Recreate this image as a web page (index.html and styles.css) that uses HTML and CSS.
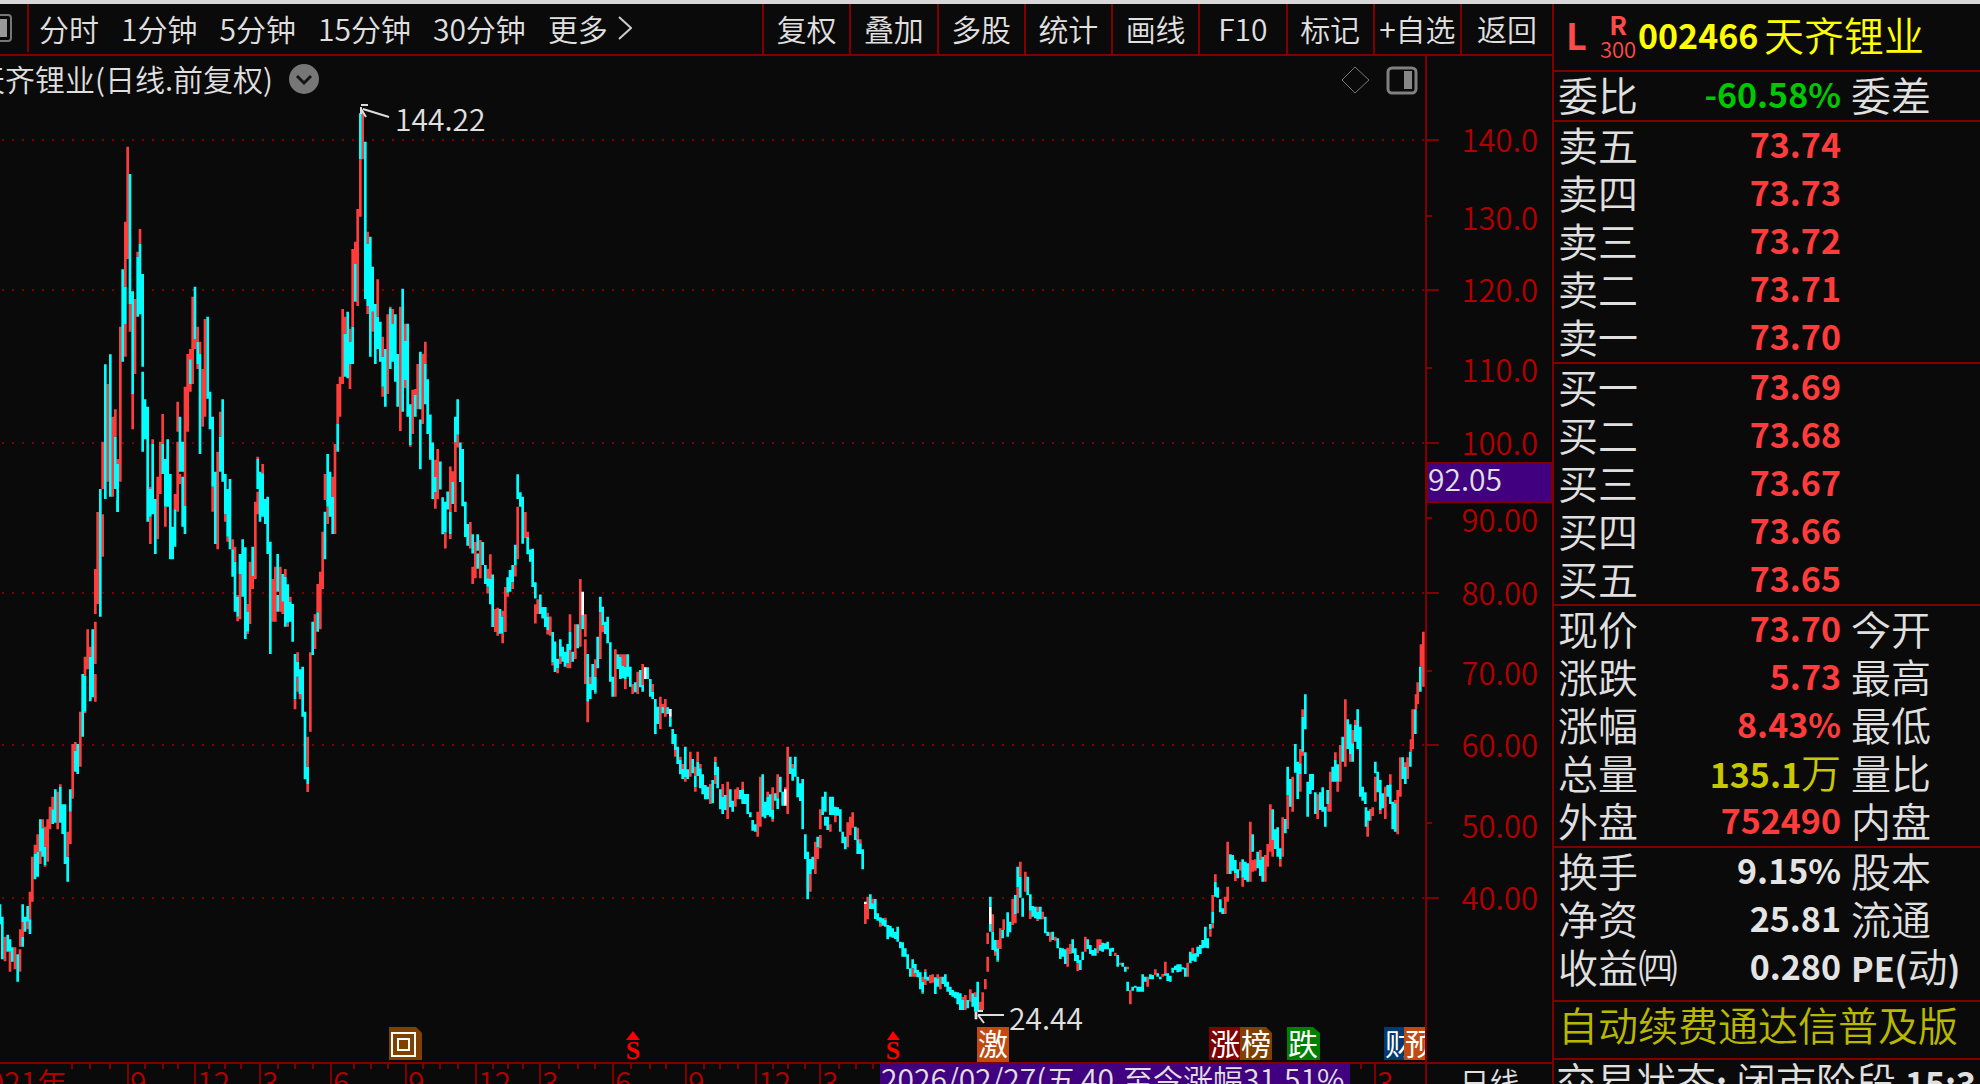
FILE: index.html
```html
<!DOCTYPE html>
<html lang="zh-CN">
<head>
    <meta charset="UTF-8">
    <meta name="viewport" content="width=device-width, initial-scale=1.0">
    <title>天齐锂业 002466 日线</title>
    <link rel="stylesheet" href="styles.css">
</head>
<body>
    <div class="window">
        <main class="left">
            <nav class="toolbar">
                <button class="layout-btn" aria-label="布局">
                    <svg width="12" height="28" viewBox="0 0 12 28"><path d="M0 1H8Q11 1 11 4V24Q11 27 8 27H0" fill="none" stroke="#777" stroke-width="2"/><rect x="0" y="5" width="7" height="18" fill="#999"/></svg>
                </button>
                <div class="periods">
                    <button>分时</button>
                    <button>1分钟</button>
                    <button>5分钟</button>
                    <button>15分钟</button>
                    <button>30分钟</button>
                    <button class="more">更多<svg width="14" height="26" viewBox="0 0 14 26"><path d="M1 2L13 13L1 24" fill="none" stroke="#ccc" stroke-width="2"/></svg></button>
                </div>
                <div class="tools">
                    <button>复权</button>
                    <button>叠加</button>
                    <button>多股</button>
                    <button>统计</button>
                    <button>画线</button>
                    <button>F10</button>
                    <button>标记</button>
                    <button>+自选</button>
                    <button>返回</button>
                </div>
            </nav>

            <svg class="chart" viewBox="0 56 1552 1006">
                <g id="grid"></g>
                <g id="bars"></g>

                <text class="txt" x="-25" y="91">天齐锂业(日线.前复权)</text>
                <circle cx="304" cy="79" r="15" fill="#777"/>
                <path d="M297 76L304 83L311 76" fill="none" stroke="#151515" stroke-width="3"/>
                <path d="M1355 67L1369 80L1355 93L1342 80Z" fill="none" stroke="#777" stroke-width="1"/>
                <rect x="1388" y="68" width="28" height="25" rx="4" fill="none" stroke="#808080" stroke-width="3"/>
                <rect x="1404" y="71" width="8" height="18" fill="#888"/>

                <!-- high and low markers -->
                <path d="M361 114V107M361 105H368M361 109L366 117M363 109L389 117" fill="none" stroke="#ddd" stroke-width="2"/>
                <text class="txt" x="395" y="131">144.22</text>
                <path d="M976 1012V1018M978 1015H1004M978 1011H983M978 1015L984 1023" fill="none" stroke="#ddd" stroke-width="2"/>
                <text class="txt" x="1009" y="1030">24.44</text>

                <!-- event badges -->
                <g class="badge">
                    <path d="M389 1027H416L422 1033V1060H389Z" fill="#804000"/>
                    <path d="M392 1033H415V1056H392ZM398 1039H409V1050H398Z" fill="none" stroke="#fff" stroke-width="2"/>
                    <path d="M977 1027H1009V1062H977Z" fill="#c04a10"/>
                    <text x="993" y="1055">激</text>
                    <path d="M1209 1027H1240V1060H1209Z" fill="#800000"/>
                    <text x="1225" y="1055">涨</text>
                    <path d="M1240 1027H1266L1272 1033V1060H1240Z" fill="#804000"/>
                    <text x="1256" y="1055">榜</text>
                    <path d="M1287 1027H1313L1320 1033V1060H1287Z" fill="#008000"/>
                    <text x="1303" y="1055">跌</text>
                    <path d="M1384 1027H1416V1060H1384Z" fill="#003a70"/>
                    <text x="1400" y="1055">财</text>
                    <path d="M1404 1027H1425V1060H1404Z" fill="#c04a10"/>
                    <text x="1420" y="1055">预</text>
                </g>
                <g class="mark">
                    <path d="M626 1040L633 1031L640 1040Z"/>
                    <text x="633" y="1059">S</text>
                    <path d="M887 1040L893 1031L900 1040Z"/>
                    <text x="893" y="1059">S</text>
                </g>

                <!-- price axis -->
                <rect x="1427" y="56" width="125" height="1006" fill="#0a0a0a"/>
                <path d="M1426 56V1062" stroke="#800000" stroke-width="2"/>
                <g id="prices"></g>
                <rect x="1427" y="463" width="125" height="39" fill="#400080" stroke="#800000" stroke-width="2"/>
                <text class="txt" x="1428" y="491">92.05</text>
            </svg>

            <div class="time-row">
                <svg class="timeline" viewBox="0 1064 1425 34">
                    <g id="ticks"></g>
                    <rect x="880" y="1064" width="470" height="34" fill="#400080"/>
                    <text class="txt" y="1091"><tspan x="881">2026/02/27(五</tspan><tspan x="1081">40</tspan><tspan x="1123">至今涨幅31.51%</tspan></text>
                </svg>
                <button class="period-now">日线</button>
            </div>
        </main>

        <aside class="quote">
            <h1 class="stock">
                <span class="flag-l">L</span>
                <span class="flags"><b>R</b><small>300</small></span>
                <span class="code">002466</span>
                <span class="name">天齐锂业</span>
            </h1>
            <table>
                <tr><th>委比</th><td class="down">-60.58%</td><th>委差</th></tr>
            </table>
            <table>
                <tr><th>卖五</th><td>73.74</td><th></th></tr>
                <tr><th>卖四</th><td>73.73</td><th></th></tr>
                <tr><th>卖三</th><td>73.72</td><th></th></tr>
                <tr><th>卖二</th><td>73.71</td><th></th></tr>
                <tr><th>卖一</th><td>73.70</td><th></th></tr>
            </table>
            <table>
                <tr><th>买一</th><td>73.69</td><th></th></tr>
                <tr><th>买二</th><td>73.68</td><th></th></tr>
                <tr><th>买三</th><td>73.67</td><th></th></tr>
                <tr><th>买四</th><td>73.66</td><th></th></tr>
                <tr><th>买五</th><td>73.65</td><th></th></tr>
            </table>
            <table>
                <tr><th>现价</th><td>73.70</td><th>今开</th></tr>
                <tr><th>涨跌</th><td>5.73</td><th>最高</th></tr>
                <tr><th>涨幅</th><td>8.43%</td><th>最低</th></tr>
                <tr><th>总量</th><td class="vol">135.1<span>万</span></td><th>量比</th></tr>
                <tr><th>外盘</th><td>752490</td><th>内盘</th></tr>
            </table>
            <table class="basics">
                <tr><th>换手</th><td class="flat">9.15%</td><th>股本</th></tr>
                <tr><th>净资</th><td class="flat">25.81</td><th>流通</th></tr>
                <tr><th>收益㈣</th><td class="flat">0.280</td><th><b>PE(</b>动<b>)</b></th></tr>
            </table>
            <p class="notice">自动续费通达信普及版</p>
            <p class="status">交易状态<b>:</b> 闭市阶段 <b>15:3</b></p>
        </aside>
    </div>
    <script src="chart.js"></script>
</body>
</html>
```

FILE: styles.css
```css
* {
    box-sizing: border-box;
}

body {
    margin: 0;
    background: #0a0a0a;
    color: #e0e0e0;
    font-family: "Noto Sans CJK SC", sans-serif;
    font-weight: 350;
    overflow: hidden;
}

button {
    padding: 0;
    border: 0;
    background: none;
    color: inherit;
    font: inherit;
    cursor: pointer;
    white-space: nowrap;
}

.window {
    display: grid;
    grid-template-columns: minmax(0, 1fr) 428px;
    height: 100vh;
    overflow: hidden;
    border-top: 4px solid #d8d8d8;
}

/* toolbar */
.toolbar {
    display: flex;
    height: 52px;
    padding-bottom: 2px;
    border-bottom: 2px solid #800000;
    font-size: 30px;
    line-height: 44px;
}

.layout-btn {
    width: 29px;
    border-right: 2px solid #800000;
    display: flex;
    align-items: center;
}

.periods {
    flex: 1;
    display: flex;
    gap: 22px;
    padding-left: 10px;
}

.more {
    display: flex;
    align-items: center;
    gap: 10px;
}

.tools {
    display: grid;
    grid-template-columns: repeat(8, 1fr) 92px;
    width: 790px;
    margin-bottom: -2px;
}

.tools button {
    padding-bottom: 2px;
    border-left: 2px solid #800000;
}

/* chart */
.chart {
    display: block;
    width: 100%;
}

.txt {
    fill: #e0e0e0;
    font-size: 30px;
}

.axis-txt {
    fill: #b00000;
    font-size: 30px;
}

.price-txt {
    fill: #b00000;
    font-size: 31px;
}

.badge text {
    fill: #fff;
    font-size: 30px;
    font-weight: 400;
    text-anchor: middle;
}

.mark {
    fill: #ff0000;
}

.mark text {
    font-family: "Liberation Serif", serif;
    font-size: 26px;
    font-weight: bold;
    text-anchor: middle;
}

.time-row {
    display: flex;
    border-top: 2px solid #800000;
}

.timeline {
    display: block;
    flex: 1;
    min-width: 0;
}

.period-now {
    width: 127px;
    height: 34px;
    border-left: 2px solid #800000;
    font-size: 30px;
    line-height: 34px;
}

/* quote panel */
.quote {
    border-left: 2px solid #800000;
    overflow: hidden;
    white-space: nowrap;
}

.stock {
    display: flex;
    align-items: center;
    height: 66px;
    margin: 0;
    padding: 0 0 6px 12px;
    color: #ffff00;
    font-weight: 350;
}

.flag-l {
    width: 32px;
    color: #ff4a4a;
    font-size: 36px;
    font-weight: bold;
}

.flags {
    width: 40px;
    display: flex;
    flex-direction: column;
    align-items: center;
    color: #ff4a4a;
    font-size: 26px;
    line-height: 24px;
    padding-top: 4px;
}

.flags b {
    font-weight: bold;
}

.flags small {
    font-size: 22px;
}

.code {
    width: 126px;
    font-size: 34px;
    font-weight: bold;
}

.name {
    font-size: 40px;
}

table {
    width: 100%;
    table-layout: fixed;
    border-spacing: 0;
    border-top: 2px solid #800000;
}

tr {
    height: 48px;
}

th,
td {
    height: 48px;
    padding: 0 0 4px;
    line-height: 40px;
}

th {
    padding-left: 4px;
    font-size: 40px;
    font-weight: 350;
    text-align: left;
}

th:first-child {
    width: 124px;
}

th:last-child {
    padding-left: 10px;
}

th b {
    font-size: 34px;
    font-weight: bold;
}

td {
    width: 163px;
    color: #ff3c3c;
    font-size: 34px;
    font-weight: bold;
    text-align: right;
}

.down {
    color: #00c800;
}

.vol {
    color: #c8c800;
}

.vol span {
    font-size: 40px;
    font-weight: 350;
}

.flat {
    color: #e4e4e4;
}

.basics {
    padding-bottom: 8px;
}

.notice,
.status {
    margin: 0;
    border-top: 2px solid #800000;
    font-size: 40px;
}

.notice {
    height: 58px;
    padding-left: 4px;
    line-height: 44px;
    color: #b8b800;
}

.status {
    padding-left: 2px;
    line-height: 40px;
}

.status b {
    font-size: 34px;
    font-weight: bold;
}
```

FILE: chart.js
```javascript
// each block: origin x, origin y, y scale, then "x top bottom" triples in thirds of a pixel
const blocks = [
    {
        x: 0, y: 100, sy: 1 / 3,
        down: `301 1167 1200,316 793 1197,331 763 1190,346 1010 1167,353 1092 1236,368 508 785,376 560 672,390 222 612,398 574 882,413 470 650,420 432 643,428 522 800,428 815 1055,435 898 1018,443 920 1200,451 1167 1200,458 1032 1200,466 1197 1200,488 1032 1122,496 1077 1200,503 1018 1200,511 1122 1200,540 950 1115,548 1025 1115,548 1130 1200,571 778 852,585 560 717,593 725 792,600 762 1062,623 650 896,630 875 988,638 950 1160,646 1115 1200,661 1010 1115,668 898 1145,676 1122 1200,683 1167 1200,690 1137 1200,773 1077 1167,780 1115 1200,788 1120 1200,796 1197 1200,803 1190 1200,983 1062 1205,990 1115 1200,998 1190 1200,1013 972 1055,1035 702 830,1043 635 835,1050 725 793,1058 680 792,1066 492 605,1081 40 178,1096 125 597,1103 432 618,1111 410 770,1118 500 635,1126 612 792,1133 650 747,1141 665 785,1148 770 860,1156 747 920,1171 625 807,1178 672 785,1186 643 845,1193 762 920`,
        up: `308 1025 1167,323 852 1145,338 950 1190,346 928 1010,353 1077 1092,361 680 1145,376 365 560,376 672 770,383 140 477,390 612 695,398 882 988,405 597 822,413 455 470,420 387 432,451 1160 1167,458 1018 1032,473 1130 1200,481 1025 1182,488 942 1032,525 1182 1200,533 905 995,533 1025 1200,540 1122 1152,555 860 1200,563 762 995,571 747 778,571 852 875,578 590 852,585 717 747,593 680 725,593 792 807,600 725 762,608 807 980,615 657 950,638 1160 1200,653 1055 1200,661 935 1010,773 1070 1077,773 1175 1200,788 1092 1120,975 1122 1200,998 1130 1190,1005 1032 1200,1013 852 972,1020 830 950,1028 627 852,1035 650 702,1050 687 725,1050 793 867,1058 447 680,1066 425 492,1073 327 618,1081 178 350,1088 35 178,1103 395 432,1103 618 642,1118 635 695,1133 538 650,1148 710 770,1148 860 890,1163 643 882,1171 620 625,1178 627 672`
    },
    {
        x: 0, y: 500, sy: 1 / 3,
        down: `0 1213 1273,7 1250 1378,23 1304 1355,30 1318 1355,37 1342 1385,53 1363 1445,68 1213 1266,68 1310 1340,75 1250 1295,83 1218 1265,90 1258 1302,105 1062 1138,113 1055 1130,121 958 1055,128 985 1070,135 1040 1095,158 928 972,166 868 968,181 860 968,188 913 1002,195 913 1092,203 1070 1145,211 868 935,226 752 815,233 732 822,248 522 710,255 528 635,271 470 604,278 388 592,301 0 350,353 0 35,443 0 65,451 0 50,458 0 43,466 0 162,496 0 20,503 0 20,511 0 178,518 80 178,525 28 140,548 0 80,555 18 102,646 0 132,676 0 43,683 0 110,690 0 148,698 148 230,705 185 335,713 290 350,720 162 222,728 118 290,736 142 417,743 335 395,758 140 228,780 0 65,788 0 50,796 0 72,803 0 162,811 125 462,833 162 275,833 285 335,848 222 305,856 230 380,863 253 368,871 305 365,878 312 425,885 462 598,893 485 530,900 508 582,908 500 650,915 635 838,923 800 852,938 365 465,953 337 395,975 35 178,983 0 20,990 0 50,998 0 102`,
        up: `15 1310 1384,30 1355 1415,45 1342 1408,60 1348 1415,61 1288 1340,68 1266 1310,83 1265 1288,90 1175 1258,97 1070 1205,105 1034 1062,113 1003 1055,121 1055 1092,128 958 985,135 980 1040,135 1095 1100,143 958 1085,150 920 988,158 890 928,173 875 988,181 853 860,203 995 1070,211 935 1032,218 732 896,226 726 752,241 635 800,255 470 528,255 635 640,263 388 508,271 440 470,286 207 342,286 365 492,286 522 605,293 36 312,308 43 170,451 50 132,473 0 118,496 20 80,525 0 28,533 0 35,555 0 18,638 0 35,653 0 148,676 43 65,683 110 125,698 118 148,705 140 185,713 285 290,713 350 364,720 222 358,743 312 335,743 395 402,750 185 372,758 228 267,766 5 237,773 0 43,818 237 365,826 200 365,841 200 335,848 305 342,856 207 230,863 368 380,871 290 305,885 598 628,893 457 485,893 530 575,900 582 598,923 710 800,923 852 876,931 457 695,945 343 447,953 252 337,961 215 388,968 95 267,983 20 72,1005 0 102`
    },
    {
        x: 300, y: 100, sy: 0.38265,
        down: `308 493 815,316 630 732,323 585 828,331 795 902,346 770 828,361 658 808,361 835 965,376 690 795,383 730 873,391 822 940,398 895 1043,406 985 1025,421 945 1018,428 1038 1135,436 1050 1130,443 1023 1070,451 1077 1135,458 998 1056,466 828 895,473 782 875,481 895 998,488 912 1062,496 1050 1142,503 1108 1165,518 1135 1185,533 1135 1178,533 1185 1225,548 1155 1215,556 1215 1265,563 1250 1272,571 1252 1318,578 1240 1377,600 1330 1395,607 1350 1395,623 1247 1288,630 1228 1285,638 1215 1260,646 1162 1215,653 978 1043,661 1025 1063,668 1037 1160,683 1142 1187,691 1175 1207,698 1173 1273,706 1260 1303,721 1292 1343,728 1325 1355,736 1325 1377,743 1350 1385,758 1390 1470,765 1415 1495,773 1460 1485`,
        up: `301 540 865,316 585 630,316 732 753,331 902 906,338 757 873,346 755 770,353 690 808,368 663 847,376 632 690,406 940 985,406 1025 1068,413 912 1043,436 1130 1172,451 958 1077,451 1135 1147,458 970 998,466 895 1077,473 875 908,511 1103 1172,518 1220 1265,526 1155 1250,541 1150 1250,563 1225 1250,563 1272 1290,571 1187 1252,586 1330 1390,593 1327 1400,608 1335 1350,608 1395 1420,616 1273 1390,623 1288 1298,638 1260 1278,646 1215 1245,653 1063 1200,676 1077 1145,683 1128 1142,706 1318 1368,713 1305 1343,743 1340 1350,743 1385 1397,751 1350 1400,758 1470 1478,773 1485 1498`
    },
    {
        x: 560, y: 560, sy: 1 / 3,
        down: `1 238 290,8 260 305,15 275 320,23 252 310,30 215 270,38 275 305,53 193 265,68 165 207,83 282 425,91 372 417,98 312 390,106 350 398,113 230 325,121 110 157,128 140 195,136 185 222,143 170 250,151 247 365,158 350 410,173 283 327,181 290 357,188 318 355,196 320 357,203 283 350,211 320 380,226 367 397,241 330 382,248 375 395,263 322 357,271 357 410,278 395 417,286 417 522,293 440 492,308 440 460,323 442 462,331 470 500,338 507 552,346 522 570,353 560 612,361 600 643,368 627 657,376 560 652,383 628 657,398 597 640,406 648 682,413 605 648,421 625 685,428 643 703,436 675 718,443 680 718,458 660 730,466 605 645,473 620 685,481 688 748,488 710 762,496 705 750,511 688 742,518 722 755,541 690 718,548 688 732,556 702 732,563 702 762,571 757 772,578 780 812,586 793 815,608 643 770,615 725 775,623 710 765,631 703 770,638 750 778,646 700 722,653 715 747,661 650 697,668 695 737,691 590 642,698 625 662,706 590 650,713 650 712,721 670 723,728 657 808,736 823 897,743 875 1018,751 897 942,758 890 928,773 830 862,788 710 765,796 695 755,796 770 797,803 770 810,811 710 765,818 710 765,826 740 767,833 742 767,841 748 815,848 815 850,856 830 868,886 800 840,893 838 882,901 850 882,908 868 928,931 1003 1047,938 1030 1047,946 1017 1077,953 1060 1082,961 1072 1088,968 1075 1097,976 1080 1100,983 1095 1138,991 1097 1130,998 1105 1133,1006 1115 1137,1013 1100 1145,1021 1145 1165,1028 1147 1190,1036 1165 1190,1043 1183 1227,1051 1225 1250,1058 1198 1225,1066 1212 1240,1073 1230 1252,1081 1237 1288,1088 1265 1298,1096 1235 1257,1103 1250 1262,1126 1252 1302,1133 1255 1280,1148 1250 1272,1156 1243 1280,1163 1265 1295,1171 1280 1305,1178 1290 1310,1186 1295 1315,1193 1297 1333,1201 1300 1350,1208 1320 1350,1223 1320 1345,1238 1300 1340,1246 1310 1355,1253 1265 1355,1291 1010 1040,1291 1092 1115,1298 1115 1170,1306 1140 1175,1313 1165 1202`,
        up: `1 290 312,23 310 325,30 163 215,30 270 325,46 193 297,61 57 260,76 163 230,76 238 372,83 425 487,91 350 372,106 298 350,106 398 402,121 157 297,128 195 217,166 268 410,181 283 290,188 283 318,196 283 320,196 357 387,218 372 402,233 335 402,248 312 375,278 372 395,301 410 507,308 432 440,316 417 470,346 570 590,361 590 600,368 612 627,376 652 665,391 575 650,406 620 648,406 682 695,413 575 605,421 612 625,451 672 732,466 590 605,466 645 672,488 672 710,503 665 777,526 688 740,533 682 718,548 665 688,593 755 830,601 650 800,623 695 710,638 682 750,638 778 785,653 643 715,676 682 690,683 560 762,698 612 625,751 942 995,766 845 942,773 862 897,781 748 808,781 825 865,811 793 815,826 767 787,863 787 862,871 770 825,878 757 803,893 803 838,901 838 850,916 1032 1092,923 1010 1078,938 1017 1030,961 1088 1100,976 1073 1080,1058 1225 1250,1066 1240 1250,1088 1250 1265,1088 1298 1302,1096 1228 1235,1096 1257 1275,1111 1245 1270,1118 1243 1268,1133 1243 1255,1141 1250 1288,1208 1310 1320,1216 1305 1350,1231 1288 1325,1246 1297 1310,1261 1325 1350,1268 1297 1350,1276 1257 1288,1283 1118 1152,1283 1190 1235,1298 1063 1115,1306 1175 1187,1313 1140 1165,1313 1202 1206`,
        flat: `68 95 165,256 322 357,331 447 470,676 688 737,916 1025 1032,1291 1040 1092,1248 1355 1378`
    },
    {
        x: 1000, y: 600, sy: 1 / 3,
        down: `8 990 1015,23 937 1010,30 965 997,46 885 943,53 800 862,61 830 893,68 895 950,83 830 885,91 883 932,98 918 950,106 920 955,113 935 958,121 920 958,136 950 1000,143 995 1008,158 995 1020,173 1015 1045,181 1043 1077,188 1045 1070,196 1048 1092,218 1018 1060,226 1045 1083,233 1065 1090,241 1080 1110,248 1055 1080,263 1018 1047,271 1035 1062,278 1050 1067,286 1045 1067,301 1035 1052,308 1028 1055,316 1030 1048,323 1025 1048,331 1045 1068,338 1043 1055,353 1065 1100,368 1088 1100,376 1100 1115,383 1145 1173,398 1160 1172,406 1157 1163,413 1160 1175,421 1160 1175,428 1123 1175,436 1130 1145,451 1123 1138,458 1125 1138,473 1120 1130,481 1130 1138,496 1120 1127,503 1120 1143,511 1127 1145,518 1103 1118,526 1097 1110,533 1093 1117,541 1093 1115,548 1102 1108,556 1103 1130,571 1055 1090,578 1062 1082,586 1060 1085,593 1040 1070,601 1035 1062,608 1020 1045,616 980 1043,623 1015 1045,631 972 988,638 935 970,646 845 890,653 862 893,661 898 937,668 925 942,691 763 822,698 765 812,706 780 820,713 808 835,728 778 833,736 785 840,743 790 845,758 703 755,773 755 805,781 780 828,788 770 845,818 628 720,826 688 747,833 682 770,841 745 777,856 657 700,863 500 585,871 537 620,886 432 518,893 485 597,901 490 522,908 350 455,916 283 388,916 457 522,923 545 650,931 522 582,938 522 570,946 577 642,961 577 630,968 562 635,976 620 680,983 570 612,998 500 545,1006 480 545,1013 493 545,1028 410 485,1043 358 447,1051 373 462,1058 430 485,1066 375 425,1073 328 447,1081 380 590,1088 560 602,1096 577 612,1098 622 680,1106 632 662,1126 485 520,1133 515 577,1141 540 630,1148 580 625,1163 555 590,1171 553 612,1178 605 688,1186 610 695,1208 472 537,1216 500 552,1231 455 500,1246 328 402,1261 200 275`,
        up: `1 985 1047,11 958 990,38 897 975,46 943 970,53 862 940,61 785 830,76 815 875,91 932 957,113 920 935,113 958 963,128 935 958,151 997 1025,166 1010 1022,203 1043 1100,211 1032 1062,233 1090 1113,256 1010 1055,293 1018 1060,301 1018 1035,346 1058 1068,361 1088 1095,383 1100 1108,391 1170 1213,443 1130 1160,466 1108 1125,488 1122 1130,496 1085 1120,563 1088 1130,578 1043 1062,631 988 1010,638 885 935,638 970 985,646 823 845,676 890 942,683 860 905,683 725 822,706 820 843,721 785 812,728 833 860,751 665 845,758 780 815,766 778 812,781 750 780,796 765 845,803 732 800,811 613 755,818 720 770,841 777 800,848 652 770,863 585 687,878 530 635,901 447 490,901 522 575,908 328 350,908 455 467,953 583 657,986 612 635,991 515 635,1006 457 480,1013 545 575,1021 435 545,1036 298 500,1051 462 485,1058 390 430,1066 360 375,1103 662 710,1111 627 662,1118 622 648,1126 530 605,1141 630 642,1156 560 657,1171 523 553,1186 600 610,1193 570 703,1201 472 590,1216 487 500,1223 472 537,1233 418 455,1238 328 447,1248 283 328,1253 247 312,1263 133 200,1270 95 260`
    }
];

const colors = { down: '#00ffff', up: '#ff3c3c', flat: '#ffffff' };

let bars = '';
blocks.forEach(block => {
    ['up', 'down', 'flat'].forEach(kind => {
        if (!block[kind]) return;
        const d = block[kind].split(',').map(bar => {
            const [x, top, bottom] = bar.trim().split(' ');
            return `M${x} ${top}V${bottom}`;
        }).join('');
        bars += `<path d="${d}" transform="translate(${block.x} ${block.y}) scale(${1 / 3} ${block.sy})" stroke="${colors[kind]}" stroke-width="8"/>`;
    });
});
document.getElementById('bars').innerHTML = bars;

// price labels: text, tick y, label y, major tick
const prices = [
    ['140.0', 140, 140, true], ['130.0', 216, 218, false],
    ['120.0', 290, 290, true], ['110.0', 368, 370, false],
    ['100.0', 443, 443, true], ['90.00', 518, 520, false],
    ['80.00', 593, 593, true], ['70.00', 671, 673, false],
    ['60.00', 745, 745, true], ['50.00', 823, 826, false],
    ['40.00', 898, 898, true]
];
let grid = '';
let labels = '';
prices.forEach(([text, tick, y, major]) => {
    if (major) {
        grid += `<path d="M2 ${tick}H1424" stroke="#800000" stroke-width="2" stroke-dasharray="2 8"/>`;
    }
    labels += `<path d="M1427 ${tick}H${major ? 1439 : 1432}" stroke="#800000" stroke-width="2"/>`;
    labels += `<text class="price-txt" x="1538" y="${y + 12}" text-anchor="end">${text}</text>`;
});
document.getElementById('grid').innerHTML = grid;
document.getElementById('prices').innerHTML = labels;

// months along the bottom
const months = [[128, 9], [195, 12], [260, 3], [331, 6], [406, 9], [476, 12], [540, 3], [613, 6], [686, 9], [756, 12], [820, 3], [1375, 3]];
const minor = [72, 90, 110, 145, 163, 178, 209, 225, 241, 278, 295, 313, 354, 371, 388, 423, 440, 458, 493, 508, 523, 559, 578, 595, 631, 650, 666, 704, 720, 738, 773, 788, 805, 839, 856, 873, 1361];
let ticks = '<text class="axis-txt" x="-29" y="1094">2021年</text>';
months.forEach(([x, month]) => {
    ticks += `<path d="M${x} 1064V1098" stroke="#800000" stroke-width="2"/>`;
    ticks += `<text class="axis-txt" x="${x + 2}" y="1094">${month}</text>`;
});
minor.forEach(x => {
    ticks += `<path d="M${x} 1064V1069" stroke="#800000" stroke-width="2"/>`;
});
document.getElementById('ticks').innerHTML = ticks;
```
